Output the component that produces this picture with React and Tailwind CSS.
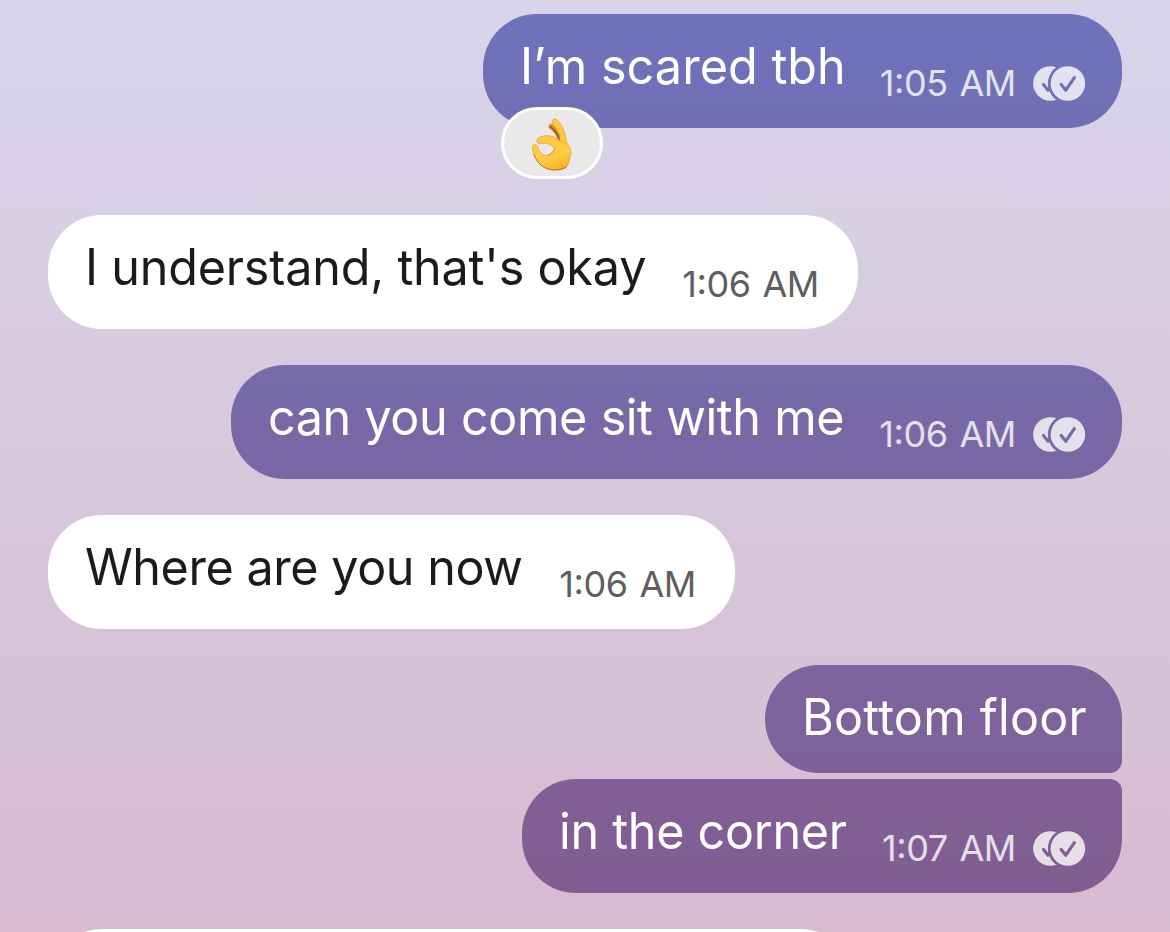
import React, { useId } from "react";
import clsx from "clsx";

const messages = [
  {
    id: 1,
    mine: true,
    text: "I’m scared tbh",
    time: "1:05 AM",
    reaction: true,
    className: "w-[639px] h-[114px] rounded-[54px] from-[#6e73bc] to-[#706fb4]",
    textClass: "tracking-[0.05px]",
  },
  {
    id: 2,
    text: "I understand, that's okay",
    time: "1:06 AM",
    className: "mt-[87px] w-[810px] h-[114px] rounded-[54px]",
    textClass: "tracking-[-0.2px]",
  },
  {
    id: 3,
    mine: true,
    text: "can you come sit with me",
    time: "1:06 AM",
    className: "mt-9 w-[891px] h-[114px] rounded-[54px] from-[#776baa] to-[#7767a3]",
    textClass: "tracking-[-0.5px] [word-spacing:0.8px]",
  },
  {
    id: 4,
    text: "Where are you now",
    time: "1:06 AM",
    className: "mt-9 w-[687px] h-[114px] rounded-[54px]",
    textClass: "tracking-[-0.45px]",
  },
  {
    id: 5,
    mine: true,
    text: "Bottom floor",
    className: "mt-9 w-[357px] h-[108px] rounded-[54px] rounded-br-[12px] from-[#7e649d] to-[#7e6199]",
    textClass: "tracking-[0.25px]",
  },
  {
    id: 6,
    mine: true,
    text: "in the corner",
    time: "1:07 AM",
    className: "mt-1.5 w-[600px] h-[114px] rounded-[54px] rounded-tr-[12px] from-[#806098] to-[#825c90]",
    textClass: "tracking-[-0.3px]",
  },
  {
    id: 7,
    className: "mt-9 w-[807px] h-[114px] rounded-[54px]",
  },
];

function ReadIcon() {
  const id = useId();

  return (
    <svg className="ml-[17px] mt-[51.5px] h-[35px] w-[53px] shrink-0" viewBox="0 0 53 35" fill="none">
      <mask id={id + "back"} maskUnits="userSpaceOnUse" x="0" y="0" width="53" height="35">
        <rect width="53" height="35" fill="white" />
        <path d="M10.5 18.5L15 24.2L24 11.7" stroke="black" strokeWidth="3.2" strokeLinecap="round" strokeLinejoin="round" />
        <circle cx="34.9" cy="17.5" r="20" fill="black" />
      </mask>
      <mask id={id + "front"} maskUnits="userSpaceOnUse" x="0" y="0" width="53" height="35">
        <rect width="53" height="35" fill="white" />
        <path d="M28.2 18.5L32.8 24.2L41.4 11.7" stroke="black" strokeWidth="3.2" strokeLinecap="round" strokeLinejoin="round" />
      </mask>
      <circle cx="17.4" cy="17.5" r="17.3" fill="white" fillOpacity="0.8" mask={`url(#${id}back)`} />
      <circle cx="34.9" cy="17.5" r="17.3" fill="white" fillOpacity="0.8" mask={`url(#${id}front)`} />
    </svg>
  );
}

function OkHand() {
  return (
    <svg className="mt-0.5 h-[54px] w-[42px]" viewBox="33 34 126 162">
      <defs>
        <linearGradient id="skin" x1="0.3" y1="0" x2="0.6" y2="1">
          <stop offset="0" stopColor="#ffc73a" />
          <stop offset="0.75" stopColor="#ffcc45" />
          <stop offset="1" stopColor="#f7b32c" />
        </linearGradient>
      </defs>
      {/* fingers behind the raised one */}
      <path d="M88 58C91 54 97 56 102 61L124 92L120 108L113 100C109 88 104 80 91 70C86 66 85 61 88 58Z" fill="#dc9722" stroke="#a8641a" strokeWidth="1.5" />
      <path d="M92 63C103 72 112 84 118 99" fill="none" stroke="#8b511c" strokeWidth="4" strokeLinecap="round" />
      <path
        fillRule="evenodd"
        d="M97 48C98 39 105 37 111 43C121 51 129 66 134 82C138 96 137 105 143 116C151 126 156 134 152 147C148 159 149 168 142 180C136 190 119 193 104 193C80 193 58 180 47 158C41 146 38 136 37 127C37 117 46 113 51 120C55 126 57 136 63 143C69 150 78 151 86 147C95 143 101 136 105 127C95 122 88 114 76 113C66 112 61 116 55 113C49 109 50 100 57 96C71 87 94 89 106 96L120 106C121 87 114 75 102 61C98 56 96 52 97 48Z"
        fill="url(#skin)"
        stroke="#dc921d"
        strokeWidth="1.8"
      />
      <path d="M42 147C50 169 67 186 88 191C107 195 130 192 140 183" fill="none" stroke="#b9680c" strokeWidth="2.5" strokeLinecap="round" />
      <path d="M121 106C129 107 135 111 138 117" fill="none" stroke="#efa626" strokeWidth="2.5" strokeLinecap="round" />
      <path d="M105 128C100 140 93 147 83 149" fill="none" stroke="#d98a18" strokeWidth="2" strokeLinecap="round" />
    </svg>
  );
}

function Time({ value, mine }) {
  const [hour, rest] = value.split(":");

  return (
    <span
      className={clsx(
        "mt-[47px] text-[36px] leading-[44px] tracking-[-0.4px] [word-spacing:2px]",
        mine ? "text-white/80" : "text-[#5e5e5e]"
      )}
    >
      {hour}
      {/* colon sits centred on the digits */}
      <span className="relative -top-[3.5px]">:</span>
      {rest}
    </span>
  );
}

function Message({ message }) {
  const { mine, text, textClass, time, reaction, className } = message;

  return (
    <div
      className={clsx(
        "relative flex shrink-0 items-start justify-between pl-[37px] whitespace-nowrap",
        mine ? "self-end bg-linear-to-b pr-9 text-white" : "self-start bg-white pr-[39px] text-[#1b1b1b]",
        className
      )}
    >
      <span className={clsx("mt-[22px] origin-left scale-x-[0.97] text-[50px] leading-[60px]", textClass)}>{text}</span>
      {time && (
        <div className="flex items-start">
          <Time value={time} mine={mine} />
          {mine && <ReadIcon />}
        </div>
      )}
      {reaction && (
        <div className="absolute left-[18px] top-[93px] flex h-[72px] w-[102px] items-center justify-center rounded-full border-[3px] border-white bg-[#e9e9e9]">
          <OkHand />
        </div>
      )}
    </div>
  );
}

export default function App() {
  return (
    <div className="flex h-[932px] w-[1170px] flex-col overflow-hidden bg-linear-to-b from-[#d8d5eb] via-[#d7c8dd] to-[#d6bbd1] pt-3.5 pr-12 pl-12 font-['Inter',sans-serif]">
      {messages.map((message) => (
        <Message key={message.id} message={message} />
      ))}
    </div>
  );
}
